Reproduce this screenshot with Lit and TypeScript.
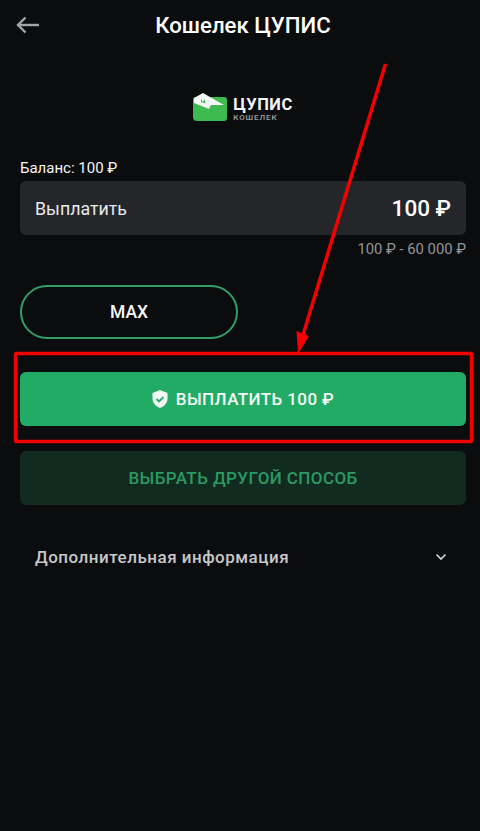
import { LitElement, html, css, svg } from "lit";
import { customElement } from "lit/decorators.js";

@customElement("app-root")
export class AppRoot extends LitElement {
  static styles = css`
    :host {
      display: block;
      position: relative;
      width: 480px;
      height: 831px;
      overflow: hidden;
      background: #0b0c0e;
      color: #fff;
      font-family: Roboto, "Noto Sans", sans-serif;
    }
    .header {
      height: 50px;
      padding-left: 6px;
      display: flex;
      align-items: center;
      justify-content: center;
      position: relative;
    }
    .back {
      position: absolute;
      left: 16px;
      top: 15px;
      width: 24px;
      height: 20px;
    }
    .title {
      font-size: 22.2px;
      font-weight: 500;
      line-height: 50px;
    }
    .logo {
      margin-top: 42px;
      padding-left: 6px;
      height: 31px;
      display: flex;
      justify-content: center;
      align-items: center;
      gap: 6px;
    }
    .logo svg {
      width: 34px;
      height: 30px;
    }
    .logo-text {
      display: flex;
      flex-direction: column;
      padding-top: 3px;
    }
    .logo-main {
      font-size: 16.5px;
      font-weight: 700;
      line-height: 16px;
      letter-spacing: 0.5px;
      color: #f4f5f5;
    }
    .logo-sub {
      font-size: 8px;
      font-weight: 500;
      line-height: 9px;
      letter-spacing: 0.9px;
      color: #a0a2a5;
    }
    .content {
      padding: 0 14px 0 20px;
      display: flex;
      flex-direction: column;
    }
    .balance {
      margin-top: 36px;
      font-size: 15px;
      font-weight: 400;
      line-height: 18px;
      height: 22px;
      color: #f6f6f6;
    }
    .field {
      height: 54px;
      border-radius: 6px;
      background: #24262a;
      display: flex;
      align-items: center;
      justify-content: space-between;
      padding: 0 15px;
      box-sizing: border-box;
    }
    .field-label {
      font-size: 17.8px;
      color: #e9eaeb;
    }
    .field-value {
      font-size: 22.5px;
      font-weight: 500;
      color: #fff;
    }
    .range {
      margin-top: 4px;
      text-align: right;
      font-size: 14.8px;
      line-height: 20px;
      color: #939598;
    }
    .max {
      margin-top: 26px;
      width: 218px;
      height: 54px;
      box-sizing: border-box;
      border: 2.5px solid #2f9f65;
      border-radius: 27px;
      display: flex;
      align-items: center;
      justify-content: center;
      font-size: 17.5px;
      font-weight: 500;
      color: #f8f8f8;
    }
    .btn {
      height: 54px;
      border-radius: 6px;
      display: flex;
      align-items: center;
      justify-content: center;
      font-size: 17px;
      font-weight: 500;
      letter-spacing: 0.4px;
    }
    .pay {
      margin-top: 33px;
      background: #22ab65;
      color: #f6faf8;
      gap: 8px;
    }
    .pay svg {
      width: 16px;
      height: 18px;
    }
    .other {
      margin-top: 25px;
      background: #122b20;
      color: #2b9a62;
    }
    .info {
      margin-top: 34px;
      padding: 0 19px 0 15px;
      height: 36px;
      display: flex;
      align-items: center;
      justify-content: space-between;
      font-size: 17px;
      font-weight: 500;
      letter-spacing: 0.5px;
      color: #c6c8ca;
    }
    .info svg {
      width: 12px;
      height: 8px;
    }
    .overlay {
      position: absolute;
      left: 0;
      top: 0;
      width: 480px;
      height: 831px;
      pointer-events: none;
    }
  `;

  render() {
    return html`
      <div class="header">
        <svg class="back" viewBox="0 0 24 20" fill="none" stroke="#a4a5a7" stroke-width="2.4">
          <path d="M1.500 10H23" />
          <path d="M9.500 2.500 2 10l7.500 7.500" />
        </svg>
        <div class="title">Кошелек ЦУПИС</div>
      </div>
      <div class="logo">
        <svg viewBox="0 0 34 30">
          <path d="M3 4h28a3 3 0 0 1 3 3v18a3 3 0 0 1-3 3H4a4 4 0 0 1-4-4V7a3 3 0 0 1 3-3z" fill="#3fba50" />
          <path d="M1 5 10 0l21 12H18l-2 4L1 10z" fill="#f5f7f5" />
          <path d="M8.500 6.500v2.500h3V6.500M10 9l2.500 1" fill="none" stroke="#3fba50" stroke-width="1" />
        </svg>
        <div class="logo-text">
          <span class="logo-main">ЦУПИС</span>
          <span class="logo-sub">КОШЕЛЕК</span>
        </div>
      </div>
      <div class="content">
        <div class="balance">Баланс: 100 ₽</div>
        <div class="field">
          <span class="field-label">Выплатить</span>
          <span class="field-value">100 ₽</span>
        </div>
        <div class="range">100 ₽ - 60 000 ₽</div>
        <div class="max">MAX</div>
        <div class="btn pay">
          <svg viewBox="0 0 16 18">
            <path d="M8 0 15.500 3v5.500c0 4.500-3.200 7.900-7.500 9.500C3.700 16.400.5 13 .5 8.500V3z" fill="#f3f8f5" />
            <path d="m4.500 9 2.500 2.500 4.500-4.500" fill="none" stroke="#22ab65" stroke-width="1.800" />
          </svg>
          <span>ВЫПЛАТИТЬ 100 ₽</span>
        </div>
        <div class="btn other">ВЫБРАТЬ ДРУГОЙ СПОСОБ</div>
        <div class="info">
          <span>Дополнительная информация</span>
          <svg viewBox="0 0 12 8" fill="none" stroke="#d5d6d7" stroke-width="1.600">
            <path d="m1.500 1.500 4.500 4.500 4.500-4.500" />
          </svg>
        </div>
      </div>
      <svg class="overlay" viewBox="0 0 480 831">
        ${svg`
          <rect x="15.500" y="353.500" width="456" height="88" fill="none" stroke="#f40000" stroke-width="3.500" rx="1" />
          <path d="M385.500 64 303 335" stroke="#f40000" stroke-width="3.500" fill="none" />
          <path d="M298 354 296.500 331 309 336z" fill="#f40000" />
        `}
      </svg>
    `;
  }
}
